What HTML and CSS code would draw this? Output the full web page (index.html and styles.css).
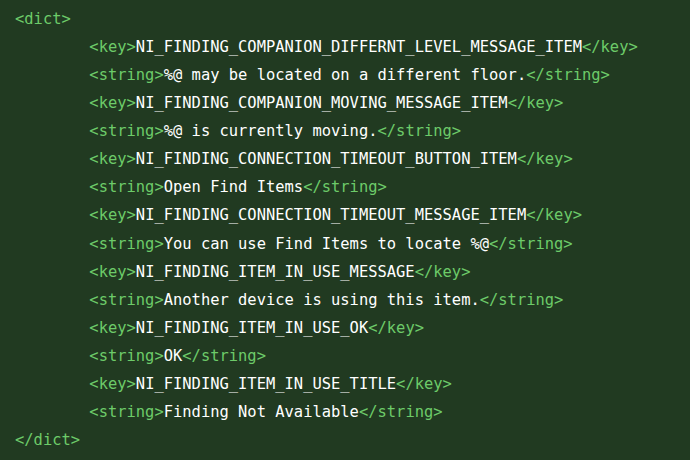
FILE: index.html
```html
<!DOCTYPE html>
<html>
<head>
<meta charset="utf-8">
<link rel="stylesheet" href="styles.css">
</head>
<body>
<pre class="code"><span class="tag">&lt;dict&gt;</span>
        <span class="tag">&lt;key&gt;</span>NI_FINDING_COMPANION_DIFFERNT_LEVEL_MESSAGE_ITEM<span class="tag">&lt;/key&gt;</span>
        <span class="tag">&lt;string&gt;</span>%@ may be located on a different floor.<span class="tag">&lt;/string&gt;</span>
        <span class="tag">&lt;key&gt;</span>NI_FINDING_COMPANION_MOVING_MESSAGE_ITEM<span class="tag">&lt;/key&gt;</span>
        <span class="tag">&lt;string&gt;</span>%@ is currently moving.<span class="tag">&lt;/string&gt;</span>
        <span class="tag">&lt;key&gt;</span>NI_FINDING_CONNECTION_TIMEOUT_BUTTON_ITEM<span class="tag">&lt;/key&gt;</span>
        <span class="tag">&lt;string&gt;</span>Open Find Items<span class="tag">&lt;/string&gt;</span>
        <span class="tag">&lt;key&gt;</span>NI_FINDING_CONNECTION_TIMEOUT_MESSAGE_ITEM<span class="tag">&lt;/key&gt;</span>
        <span class="tag">&lt;string&gt;</span>You can use Find Items to locate %@<span class="tag">&lt;/string&gt;</span>
        <span class="tag">&lt;key&gt;</span>NI_FINDING_ITEM_IN_USE_MESSAGE<span class="tag">&lt;/key&gt;</span>
        <span class="tag">&lt;string&gt;</span>Another device is using this item.<span class="tag">&lt;/string&gt;</span>
        <span class="tag">&lt;key&gt;</span>NI_FINDING_ITEM_IN_USE_OK<span class="tag">&lt;/key&gt;</span>
        <span class="tag">&lt;string&gt;</span>OK<span class="tag">&lt;/string&gt;</span>
        <span class="tag">&lt;key&gt;</span>NI_FINDING_ITEM_IN_USE_TITLE<span class="tag">&lt;/key&gt;</span>
        <span class="tag">&lt;string&gt;</span>Finding Not Available<span class="tag">&lt;/string&gt;</span>
<span class="tag">&lt;/dict&gt;</span></pre>
</body>
</html>
```
FILE: styles.css
```css
html, body {
  margin: 0;
  padding: 0;
  background: #213a21;
  height: 100%;
  overflow: hidden;
}
.code {
  margin: 0;
  padding: 5px 0 0 15px;
  font-family: "DejaVu Sans Mono", "Liberation Mono", monospace;
  font-size: 15.45px;
  line-height: 28.07px;
  color: #ffffff;
  white-space: pre;
}
.tag {
  color: #6dcb69;
}
```
